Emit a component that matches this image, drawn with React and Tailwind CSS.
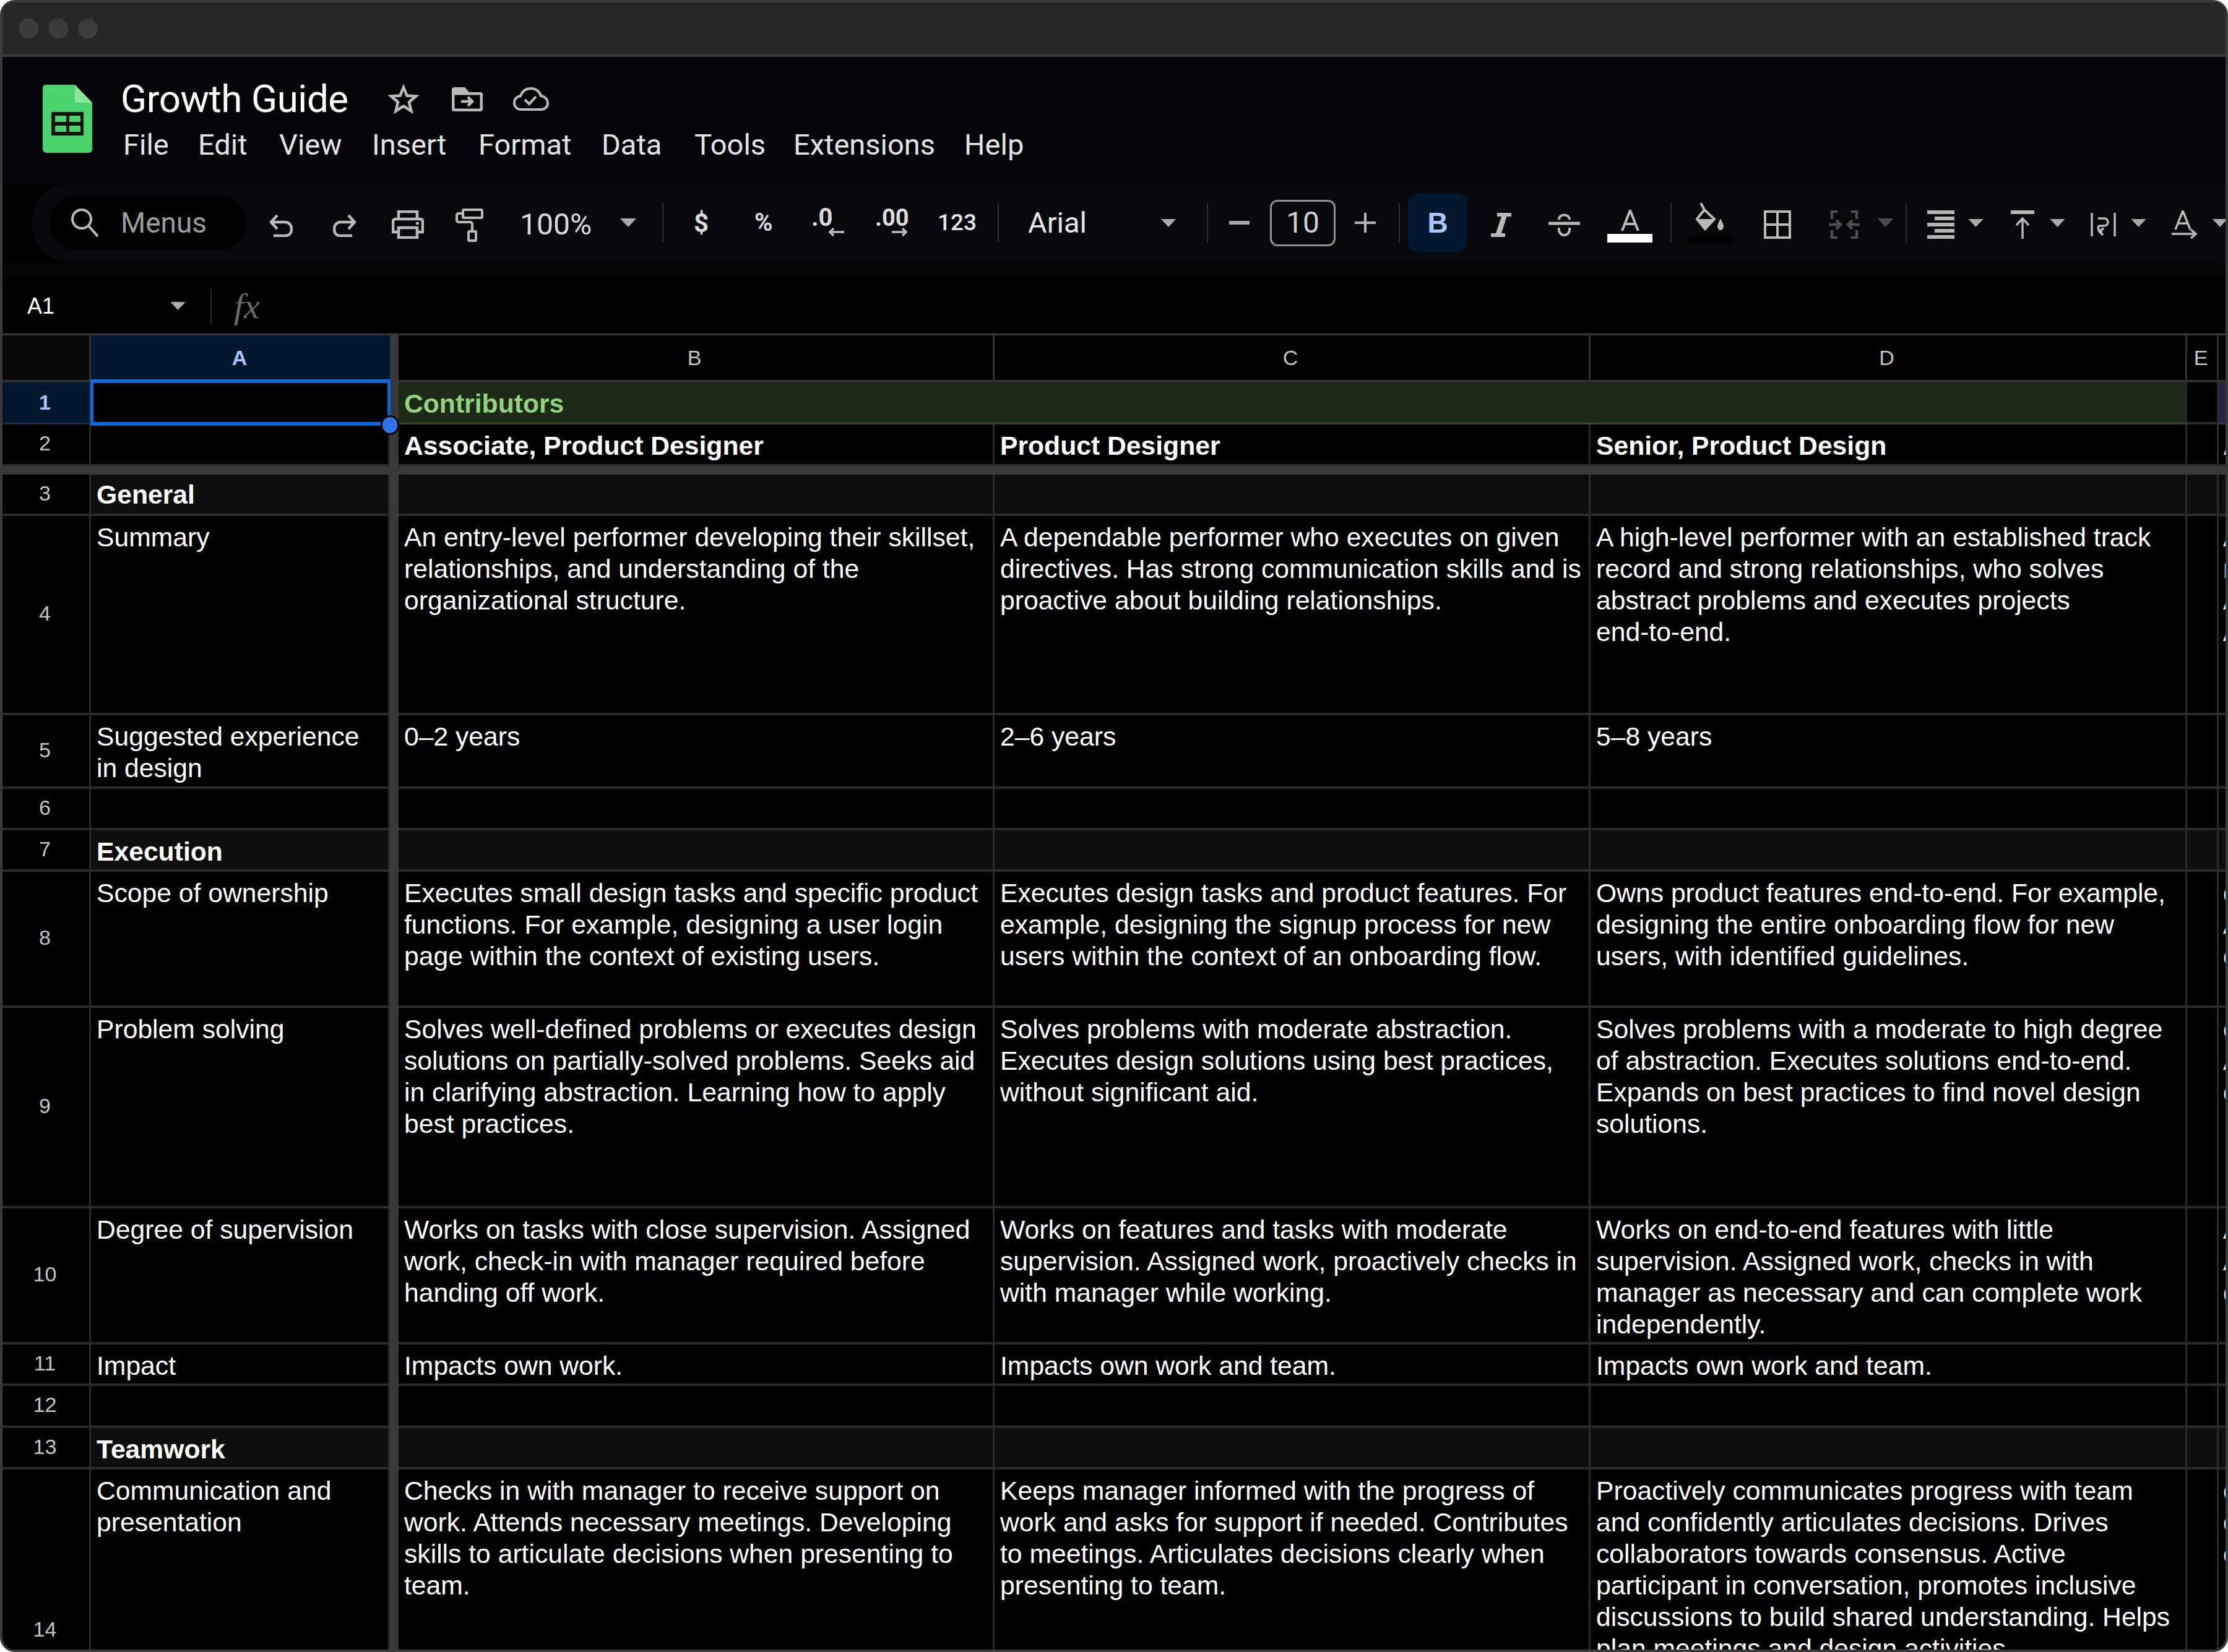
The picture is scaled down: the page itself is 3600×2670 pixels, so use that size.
import React from "react";

const COLS = "grid grid-cols-[143px_483px_14px_963px_963px_964px_51px_11px]";
const LINE = "border-[#2b2b2b]";

const rows = [
  { n: "3", h: "h-[67px]", sec: true, a: "General", top: "pt-[7px]" },
  {
    n: "4", h: "h-[322px]", a: "Summary",
    b: "An entry-level performer developing their skillset,\nrelationships, and understanding of the\norganizational structure.",
    c: "A dependable performer who executes on given\ndirectives. Has strong communication skills and is\nproactive about building relationships.",
    d: "A high-level performer with an established track\nrecord and strong relationships, who solves\nabstract problems and executes projects\nend-to-end.",
    f: "A\nr\nA\nA",
  },
  { n: "5", h: "h-[119px]", a: "Suggested experience\nin design", b: "0–2 years", c: "2–6 years", d: "5–8 years" },
  { n: "6", h: "h-[67px]" },
  { n: "7", h: "h-[67px]", sec: true, a: "Execution" },
  {
    n: "8", h: "h-[220px]", a: "Scope of ownership",
    b: "Executes small design tasks and specific product\nfunctions. For example, designing a user login\npage within the context of existing users.",
    c: "Executes design tasks and product features. For\nexample, designing the signup process for new\nusers within the context of an onboarding flow.",
    d: "Owns product features end-to-end. For example,\ndesigning the entire onboarding flow for new\nusers, with identified guidelines.",
    f: "c\nA\nc",
  },
  {
    n: "9", h: "h-[324px]", a: "Problem solving",
    b: "Solves well-defined problems or executes design\nsolutions on partially-solved problems. Seeks aid\nin clarifying abstraction. Learning how to apply\nbest practices.",
    c: "Solves problems with moderate abstraction.\nExecutes design solutions using best practices,\nwithout significant aid.",
    d: "Solves problems with a moderate to high degree\nof abstraction. Executes solutions end-to-end.\nExpands on best practices to find novel design\nsolutions.",
    f: "c\nA\nc",
  },
  {
    n: "10", h: "h-[220px]", a: "Degree of supervision",
    b: "Works on tasks with close supervision. Assigned\nwork, check-in with manager required before\nhanding off work.",
    c: "Works on features and tasks with moderate\nsupervision. Assigned work, proactively checks in\nwith manager while working.",
    d: "Works on end-to-end features with little\nsupervision. Assigned work, checks in with\nmanager as necessary and can complete work\nindependently.",
    f: "A\nA\nc",
  },
  { n: "11", h: "h-[67px]", a: "Impact", b: "Impacts own work.", c: "Impacts own work and team.", d: "Impacts own work and team." },
  { n: "12", h: "h-[68px]" },
  { n: "13", h: "h-[67px]", sec: true, a: "Teamwork" },
  {
    n: "14", h: "h-[524px]", a: "Communication and\npresentation",
    b: "Checks in with manager to receive support on\nwork. Attends necessary meetings. Developing\nskills to articulate decisions when presenting to\nteam.",
    c: "Keeps manager informed with the progress of\nwork and asks for support if needed. Contributes\nto meetings. Articulates decisions clearly when\npresenting to team.",
    d: "Proactively communicates progress with team\nand confidently articulates decisions. Drives\ncollaborators towards consensus. Active\nparticipant in conversation, promotes inclusive\ndiscussions to build shared understanding. Helps\nplan meetings and design activities.",
    f: "c\nc\nc",
  },
];

function Caret({ className = "", dim = false }) {
  return (
    <svg viewBox="0 0 26 14" className={`shrink-0 ${className}`}>
      <polygon points="0,0 26,0 13,14" fill={dim ? "#4a4a4a" : "#a9a9a9"} />
    </svg>
  );
}

function Sep({ className = "" }) {
  return <div className={`w-[2px] h-[64px] bg-[#2c2e31] shrink-0 ${className}`} />;
}

function Cell({ children, className = "", top = "pt-[9px]" }) {
  return (
    <div className={`border-b-[4px] border-r-[3px] ${LINE} pl-[9px] ${top} overflow-hidden whitespace-pre text-white text-[42.67px] leading-[51px] ${className}`}>
      {children}
    </div>
  );
}

function EdgeCell({ children, className = "" }) {
  return (
    <div className={`border-b-[4px] ${LINE} pl-[7px] pt-[9px] overflow-hidden whitespace-pre text-white text-[42.67px] leading-[51px] ${className}`}>
      {children}
    </div>
  );
}

function Bar({ className = "" }) {
  return <div className={`bg-[#393939] ${className}`} />;
}

function Logo() {
  return (
    <svg viewBox="0 0 80 110" className="w-[80px] h-[110px] shrink-0 mt-[45px] ml-[65px]">
      <path d="M5 0 H52 L80 29 V104 a6 6 0 0 1 -6 6 H6 a6 6 0 0 1 -6 -6 V5 a5 5 0 0 1 5 -5 Z" fill="#4bd36b" />
      <path d="M52 0 L80 29 H52 Z" fill="#88e69c" />
      <rect x="14" y="44" width="52" height="38" fill="#0a120c" />
      <rect x="20" y="50" width="18" height="10" fill="#4bd36b" />
      <rect x="43" y="50" width="18" height="10" fill="#4bd36b" />
      <rect x="20" y="66" width="18" height="10" fill="#4bd36b" />
      <rect x="43" y="66" width="18" height="10" fill="#4bd36b" />
    </svg>
  );
}

const I = "#b9b9b9";

function TitleBar() {
  return (
    <div className="h-[88px] bg-[#272727] border-b-[4px] border-[#3a3a3a] flex items-center pl-[26px] gap-[16px] shrink-0">
      <div className="w-[32px] h-[32px] rounded-full bg-[#3c3c3c]" />
      <div className="w-[32px] h-[32px] rounded-full bg-[#3c3c3c]" />
      <div className="w-[32px] h-[32px] rounded-full bg-[#3c3c3c]" />
    </div>
  );
}

function AppHeader() {
  const menu = [
    ["File", "w-[71px] ml-[4px]"],
    ["Edit", "w-[81px] ml-[50px]"],
    ["View", "w-[99px] ml-[50px]"],
    ["Insert", "w-[121px] ml-[51px]"],
    ["Format", "w-[147px] ml-[51px]"],
    ["Data", "w-[99px] ml-[52px]"],
    ["Tools", "w-[110px] ml-[51px]"],
    ["Extensions", "w-[225px] ml-[50px]"],
    ["Help", "w-[96px] ml-[51px]"],
  ];
  return (
    <div className="h-[204px] bg-[#030407] flex shrink-0">
      <Logo />
      <div className="ml-[46px] flex flex-col">
        <div className="mt-[40px] h-[56px] flex items-center">
          <span className="text-[62px] leading-[56px] text-white w-[367px] whitespace-nowrap font-['Roboto',sans-serif] tracking-[-0.5px]">Growth Guide</span>
          <svg viewBox="0 0 50 48" className="w-[50px] h-[48px] ml-[65px] shrink-0" fill="none" stroke={I} strokeWidth="4.5">
            <polygon points="25,5 30.5,18.5 45,19.5 34,29 37.5,43.5 25,35.5 12.5,43.5 16,29 5,19.5 19.5,18.5" />
          </svg>
          <svg viewBox="0 0 50 39" className="w-[50px] h-[39px] ml-[53px] shrink-0">
            <path d="M4 0 H21 L28 8 H46 a4 4 0 0 1 4 4 V35 a4 4 0 0 1 -4 4 H4 a4 4 0 0 1 -4 -4 V4 a4 4 0 0 1 4 -4 Z M4.500 11 V34.500 H45.500 V12.500 H4.500 Z" fill={I} fillRule="evenodd" />
            <path d="M15 23 H33 M26 16 L33 23 L26 30" fill="none" stroke={I} strokeWidth="4.500" />
          </svg>
          <svg viewBox="0 0 58 38" className="w-[58px] h-[38px] ml-[49px] shrink-0" fill="none" stroke={I} strokeWidth="4">
            <path d="M13 36 C6 36 2 31 2 25 C2 19 6 15 12 14 C15 6 21 2 29 2 C37 2 43 7 45 14 C52 15 56 20 56 26 C56 32 51 36 45 36 Z" />
            <path d="M19 20 L26 27 L37 15" />
          </svg>
        </div>
        <div className="mt-[18px] h-[56px] flex items-center text-[47px] leading-[56px] text-[#e3e3e3] font-['Roboto',sans-serif]">
          {menu.map(([t, c]) => (
            <span key={t} className={`whitespace-nowrap shrink-0 ${c}`}>{t}</span>
          ))}
        </div>
      </div>
    </div>
  );
}

function Toolbar() {
  const num = "shrink-0 whitespace-nowrap text-[#dadada] font-['Roboto',sans-serif]";
  return (
    <div className="h-[128px] ml-[48px] bg-[#07090d] rounded-l-[60px] flex items-center overflow-hidden shrink-0">
      <div className="ml-[28px] w-[319px] h-[88px] rounded-full bg-black flex items-center shrink-0">
        <svg viewBox="0 0 44 46" className="w-[44px] h-[46px] ml-[35px] shrink-0" fill="none" stroke={I} strokeWidth="4">
          <circle cx="17" cy="17" r="15" />
          <path d="M28 28 L43 45" />
        </svg>
        <span className="ml-[36px] text-[46px] leading-[56px] text-[#9c9c9c] font-['Roboto',sans-serif]">Menus</span>
      </div>

      <svg viewBox="0 0 38 36" className="w-[38px] h-[36px] ml-[36px] mt-[10px] shrink-0" fill="none" stroke={I} strokeWidth="4.500">
        <path d="M13 1 L3 12 L13 23 M3 12 H26 C32 12 36 17 36 23 C36 30 32 34 26 34 H7" />
      </svg>
      <svg viewBox="0 0 38 36" className="w-[38px] h-[36px] ml-[65px] mt-[10px] shrink-0" fill="none" stroke={I} strokeWidth="4.500">
        <path d="M25 1 L35 12 L25 23 M35 12 H12 C6 12 2 17 2 23 C2 30 6 34 12 34 H31" />
      </svg>
      <svg viewBox="0 0 52 46" className="w-[52px] h-[46px] ml-[57px] mt-[6px] shrink-0" fill="none" stroke={I} strokeWidth="4.500">
        <path d="M11 14 V2 H41 V14" />
        <path d="M11 35 H2 V18 a4 4 0 0 1 4 -4 H46 a4 4 0 0 1 4 4 V35 H41" />
        <rect x="11" y="28" width="30" height="16" />
        <rect x="39" y="19" width="5" height="4" fill={I} stroke="none" />
      </svg>
      <svg viewBox="0 0 45 54" className="w-[45px] h-[54px] ml-[51px] mt-[8px] shrink-0" fill="none" stroke={I} strokeWidth="4">
        <rect x="12" y="2" width="31" height="13" rx="1.500" />
        <path d="M12 8 H5 a3 3 0 0 0 -3 3 V19 a3 3 0 0 0 3 3 H24 a3 3 0 0 1 3 3 V36" />
        <rect x="21" y="37" width="12" height="15" rx="1.500" />
      </svg>
      <span className={`${num} text-[48px] w-[116px] ml-[59px] mr-[2px] mt-[6px]`}>100%</span>
      <Caret className="w-[26px] h-[14px] ml-[44px]" />
      <Sep className="ml-[42px]" />
      <span className={`${num} text-[42px] font-bold w-[24px] ml-[49px]`}>$</span>
      <span className={`${num} text-[40px] font-bold w-[35px] ml-[74px]`}>%</span>
      <div className="relative w-[54px] h-[50px] ml-[57px] shrink-0">
        <span className="absolute left-0 top-[-6px] text-[40px] leading-[46px] font-bold text-[#dadada] font-['Roboto',sans-serif]">.0</span>
        <svg viewBox="0 0 26 14" className="absolute left-[27px] top-[33px] w-[26px] h-[14px]" fill="none" stroke={I} strokeWidth="3.500"><path d="M26 7 H3 M9 1 L3 7 L9 13" /></svg>
      </div>
      <div className="relative w-[52px] h-[50px] ml-[49px] shrink-0">
        <span className="absolute left-0 top-[-6px] text-[38px] leading-[46px] font-bold text-[#dadada] font-['Roboto',sans-serif]">.00</span>
        <svg viewBox="0 0 26 14" className="absolute left-[27px] top-[33px] w-[26px] h-[14px]" fill="none" stroke={I} strokeWidth="3.500"><path d="M0 7 H23 M17 1 L23 7 L17 13" /></svg>
      </div>
      <span className={`${num} text-[37px] font-medium w-[58px] ml-[49px] mr-[2px] text-[#e6e6e6]`}>123</span>
      <Sep className="ml-[37px]" />
      <span className={`${num} text-[47px] w-[95px] ml-[47px] text-[#e6e6e6]`}>Arial</span>
      <Caret className="w-[24px] h-[13px] ml-[120px]" />
      <Sep className="ml-[50px]" />
      <div className="w-[33px] h-[6px] ml-[34px] bg-[#a9a9a9] shrink-0" />
      <div className="w-[106px] h-[75px] ml-[33px] rounded-[12px] border-[3px] border-[#8f8f8f] flex items-center justify-center text-[48px] text-[#cfcfcf] font-['Roboto',sans-serif] shrink-0">10</div>
      <svg viewBox="0 0 34 32" className="w-[34px] h-[32px] ml-[31px] shrink-0" fill="none" stroke={I} strokeWidth="4"><path d="M0 16 H34 M17 0 V32" /></svg>
      <Sep className="ml-[37px]" />
      <div className="w-[96px] h-[96px] ml-[13px] rounded-[16px] bg-[#03182f] flex items-center justify-center text-[46px] font-bold text-[#a8c7fa] font-['Liberation_Sans',sans-serif] shrink-0">B</div>
      <svg viewBox="0 0 33 39" className="w-[33px] h-[39px] ml-[38px] mt-[6px] shrink-0" fill={I}>
        <path d="M10 0 H33 V6 H25.500 L17 33 H23 V39 H0 V33 H8 L17 6 H10 Z" />
      </svg>
      <svg viewBox="0 0 51 39" className="w-[51px] h-[39px] ml-[60px] mt-[6px] shrink-0" fill="none" stroke={I}>
        <path d="M0 17 H51" strokeWidth="5" />
        <path d="M17 11 C17 1 34 1 34 11" strokeWidth="4" />
        <path d="M17 24 C15 40 36 40 34 24" strokeWidth="4" />
      </svg>
      <div className="w-[73px] h-[53px] ml-[44px] mt-[11px] flex flex-col items-center shrink-0">
        <svg viewBox="0 0 30 34" className="w-[30px] h-[34px] shrink-0" fill="none" stroke={I} strokeWidth="4"><path d="M2 34 L15 1 L28 34 M6 23 H24" /></svg>
        <div className="w-[73px] h-[14px] bg-white mt-[5px] shrink-0" />
      </div>
      <Sep className="ml-[29px]" />
      <div className="w-[74px] h-[65px] ml-[27px] relative shrink-0">
        <svg viewBox="0 0 46 45" className="absolute left-[12px] top-0 w-[46px] h-[45px]">
          <path d="M8 0 L14 11 M14 11 L30 26 L15 42 L2 26 Z" fill="none" stroke={I} strokeWidth="4" />
          <path d="M2 26 H30 L15 44 Z" fill={I} />
          <path d="M40 25 C43 32 45 35 45 38 a5 6 0 0 1 -10 0 C35 35 37 32 40 25 Z" fill={I} />
        </svg>
        <div className="absolute left-0 bottom-0 w-[74px] h-[12px] bg-black" />
      </div>
      <svg viewBox="0 0 44 46" className="w-[44px] h-[46px] ml-[48px] mt-[6px] shrink-0" fill="none" stroke={I} strokeWidth="4">
        <rect x="2" y="2" width="40" height="42" />
        <path d="M22 2 V44 M2 23 H42" />
      </svg>
      <svg viewBox="0 0 50 46" className="w-[50px] h-[46px] ml-[61px] mt-[6px] shrink-0" fill="none" stroke="#4d4d4d" strokeWidth="4.500">
        <path d="M14 2 H5 V14 M36 2 H45 V14 M14 44 H5 V32 M36 44 H45 V32" />
        <path d="M0 23 H18 M12 16 L19 23 L12 30 M50 23 H32 M38 16 L31 23 L38 30" />
      </svg>
      <Caret dim className="w-[27px] h-[14px] ml-[28px]" />
      <Sep className="ml-[19px]" />
      <svg viewBox="0 0 44 46" className="w-[44px] h-[46px] ml-[33px] mt-[6px] shrink-0" fill="#b4b4b4">
        <rect x="0" y="0" width="44" height="6" /><rect x="12" y="10" width="32" height="6" /><rect x="0" y="20" width="44" height="6" /><rect x="12" y="30" width="32" height="6" /><rect x="0" y="40" width="44" height="6" />
      </svg>
      <Caret className="w-[25px] h-[13px] ml-[22px]" />
      <svg viewBox="0 0 38 46" className="w-[38px] h-[46px] ml-[44px] mt-[6px] shrink-0" fill="none" stroke={I} strokeWidth="3.500">
        <path d="M0 3 H38" strokeWidth="6" />
        <path d="M19 46 V13 M9 24 L19 13 L29 24" />
      </svg>
      <Caret className="w-[25px] h-[13px] ml-[25px]" />
      <svg viewBox="0 0 41 38" className="w-[41px] h-[38px] ml-[41px] mt-[6px] shrink-0" fill="none" stroke={I} strokeWidth="3.500">
        <path d="M2 0 V38 M39 0 V38" strokeWidth="3.500" />
        <path d="M12 9 H22 C30 9 30 21 22 21 H15 C10 21 12 30 19 31 M21 25 L14 30 L20 36" />
      </svg>
      <Caret className="w-[25px] h-[13px] ml-[24px]" />
      <svg viewBox="0 0 42 46" className="w-[42px] h-[46px] ml-[41px] mt-[6px] shrink-0" fill="none" stroke={I} strokeWidth="3.500">
        <path d="M6 31 L18 1 L30 31 M10 21 H26" />
        <path d="M0 38 H38 M31 31 L39 38 L31 45" />
      </svg>
      <Caret className="w-[26px] h-[13px] ml-[23px]" />
    </div>
  );
}

function FormulaBar() {
  return (
    <>
      <div className="h-[26px] bg-[#040405] shrink-0" />
      <div className="h-[92px] bg-black border-b-[3px] border-[#3a3a3a] flex items-center shrink-0">
        <span className="ml-[40px] w-[62px] text-[36px] text-white font-['Liberation_Sans',sans-serif]">A1</span>
        <Caret className="w-[25px] h-[13px] ml-[169px]" />
        <div className="w-[2px] h-[55px] bg-[#2e2e2e] ml-[40px] shrink-0" />
        <span className="ml-[36px] text-[58px] italic text-[#6a6a6a] font-['Liberation_Serif',serif]">fx</span>
      </div>
    </>
  );
}

function Sheet() {
  const hdr = "border-b-[4px] border-r-[3px] border-[#303030] flex items-center justify-center pr-[4px] text-[34px] text-[#c4c4c4]";
  const rowNum = `flex items-center justify-center pr-[3px] pb-[3px] text-[34px] text-[#c4c4c4] border-b-[4px] border-r-[3px] ${LINE}`;
  return (
    <div className="font-['Liberation_Sans',sans-serif] bg-black">
      <div className={`${COLS} h-[76px]`}>
        <div className="bg-[#0a0a0a] border-b-[4px] border-r-[3px] border-[#303030]" />
        <div className="bg-[#03172f] border-b-[4px] border-[#303030] flex items-center justify-center pr-[3px] text-[34px] font-bold text-[#a8c7fa]">A</div>
        <Bar />
        <div className={hdr}>B</div>
        <div className={hdr}>C</div>
        <div className={hdr}>D</div>
        <div className={hdr}>E</div>
        <div className="border-b-[4px] border-[#303030]" />
      </div>
      <div className={`${COLS} h-[68px]`}>
        <div className="bg-[#03172f] border-b-[3px] border-r-[3px] border-[#1c2a3c] flex items-center justify-center pr-[3px] text-[34px] font-bold text-[#a8c7fa]">1</div>
        <div className="relative bg-black">
          <div className="absolute left-[-1px] top-[-5px] right-[-1px] bottom-[-2px] border-x-[5px] border-y-[6px] border-[#0b68d8]" />
          <div className="absolute right-[-15px] bottom-[-17px] w-[30px] h-[32px] rounded-full bg-[#3072ea] border-[3px] border-black z-10" />
        </div>
        <Bar />
        <div className="col-span-3 bg-[#1d2a17] border-b-[3px] border-[#34482a] pl-[9px] pt-[9px] text-[42.67px] leading-[51px] font-bold text-[#93d27f]">Contributors</div>
        <div className={`border-b-[4px] border-r-[3px] ${LINE}`} />
        <div className="bg-[#2a2342] border-b-[3px] border-[#3a3350]" />
      </div>
      <div className={`${COLS} h-[68px]`}>
        <div className={rowNum}>2</div>
        <Cell className="border-r-0" />
        <Bar />
        <Cell className="font-bold">Associate, Product Designer</Cell>
        <Cell className="font-bold">Product Designer</Cell>
        <Cell className="font-bold">Senior, Product Design</Cell>
        <Cell />
        <EdgeCell className="font-bold">A</EdgeCell>
      </div>
      <div className="h-[13px] bg-[#393939]" />
      {rows.map((r) => {
        const bg = r.sec ? "bg-[#0e0e0e]" : "";
        return (
          <div key={r.n} className={`${COLS} ${r.h}`}>
            <div className={rowNum}>{r.n}</div>
            <Cell top={r.top} className={`border-r-0 ${bg} ${r.sec ? "font-bold" : ""}`}>{r.a}</Cell>
            <Bar />
            <Cell className={bg}>{r.b}</Cell>
            <Cell className={bg}>{r.c}</Cell>
            <Cell className={bg}>{r.d}</Cell>
            <Cell className={bg} />
            <EdgeCell className={bg}>{r.f}</EdgeCell>
          </div>
        );
      })}
    </div>
  );
}

export default function App() {
  return (
    <div className="w-[3600px] h-[2670px] bg-white">
      <div className="w-full h-full bg-black border-4 border-[#3a3a3a] rounded-[24px] overflow-hidden flex flex-col">
        <TitleBar />
        <AppHeader />
        <Toolbar />
        <FormulaBar />
        <Sheet />
      </div>
    </div>
  );
}
